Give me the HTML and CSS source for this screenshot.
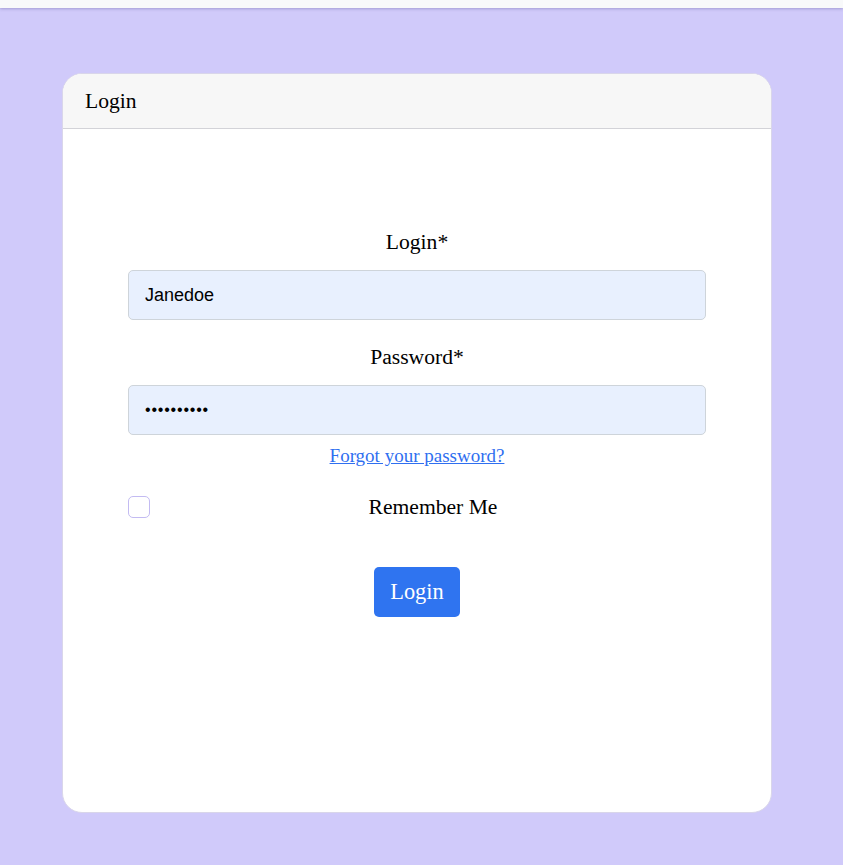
FILE: index.html
```html
<!DOCTYPE html>
<html>
<head>
<meta charset="utf-8">
<link rel="stylesheet" href="styles.css">
</head>
<body>
<div class="topbar"></div>
<main class="page">
  <section class="card">
    <header class="card-header">Login</header>
    <form class="card-body">
      <label class="field-label" for="login">Login*</label>
      <input class="field-input" id="login" type="text" value="Janedoe">
      <label class="field-label" for="pw">Password*</label>
      <input class="field-input pw-input" id="pw" type="password" value="abcdefghij">
      <a class="forgot" href="#">Forgot your password?</a>
      <div class="remember">
        <span class="checkbox"></span>
        <span class="remember-text">Remember Me</span>
      </div>
      <button class="btn" type="button">Login</button>
    </form>
  </section>
</main>
</body>
</html>
```

FILE: styles.css
```css
html, body {
  margin: 0;
  padding: 0;
}
body {
  background: #d0cafa;
  font-family: "Liberation Serif", "Times New Roman", serif;
  color: #000;
  height: 865px;
  overflow: hidden;
}
.topbar {
  height: 8px;
  background: #f8f9fa;
  box-shadow: 0 1px 3px rgba(80, 70, 140, 0.35);
  position: relative;
}
.page {
  padding: 65px 71px 0 62px;
}
.card {
  width: 710px;
  height: 740px;
  box-sizing: border-box;
  background: #fff;
  border: 1px solid #d9d6ea;
  border-radius: 20px;
  overflow: hidden;
  display: flex;
  flex-direction: column;
}
.card-header {
  height: 55px;
  box-sizing: border-box;
  background: #f7f7f7;
  border-bottom: 1px solid #d3d3d8;
  font-size: 21.6px;
  line-height: 54px;
  padding-left: 22px;
}
.card-body {
  display: flex;
  flex-direction: column;
  align-items: center;
  padding: 101px 65px 0 65px;
}
.field-label {
  font-size: 21.6px;
  line-height: 24px;
  margin-bottom: 16px;
}
.field-input {
  width: 100%;
  height: 50px;
  box-sizing: border-box;
  background: #e8f0fe;
  border: 1px solid #ced4da;
  border-radius: 5px;
  padding: 0 16px;
  font-family: "Liberation Sans", Arial, sans-serif;
  font-size: 18px;
  color: #000;
  margin-bottom: 25px;
  outline: none;
}
.pw-input {
  margin-bottom: 10px;
  font-size: 16px;
  letter-spacing: 0.8px;
}
.forgot {
  font-size: 19px;
  color: #2f6ff0;
  text-decoration: underline;
  line-height: 22px;
}
.remember {
  width: 100%;
  display: flex;
  align-items: center;
  margin-top: 28px;
}
.checkbox {
  width: 20px;
  height: 20px;
  border: 1px solid #c3bbf2;
  border-radius: 5px;
  flex: none;
}
.remember-text {
  flex: 1;
  text-align: center;
  font-size: 21.6px;
  line-height: 24px;
  padding-left: 10px;
}
.btn {
  margin-top: 48px;
  width: 86px;
  height: 50px;
  background: #2f74f0;
  color: #fff;
  border: none;
  border-radius: 5px;
  font-family: "Liberation Serif", "Times New Roman", serif;
  font-size: 22.4px;
  padding: 0;
}
```
